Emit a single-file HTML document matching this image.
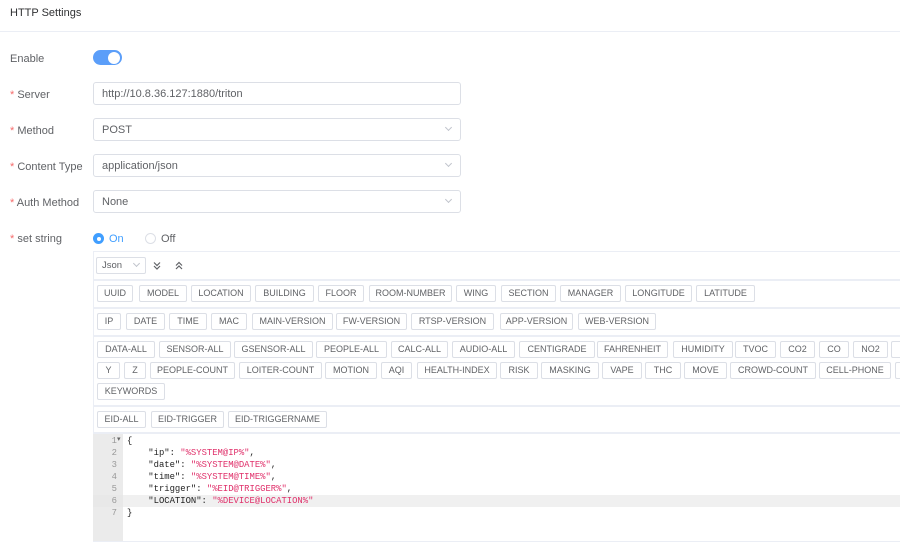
<!DOCTYPE html>
<html><head><meta charset="utf-8"><style>
*{box-sizing:border-box;margin:0;padding:0}
body{width:900px;height:550px;overflow:hidden;background:#fff;font-family:"Liberation Sans",sans-serif;color:#606266;position:relative}
.a{position:absolute}
.title{left:10px;top:7px;font-size:11px;color:#303133}
.hl{left:0;top:31px;width:900px;height:1px;background:#ebeef5}
.lab{left:10px;font-size:11px;color:#606266}
.lab i{color:#f56c6c;font-style:normal}
.inp{left:93px;width:368px;height:23px;border:1px solid #dcdfe6;border-radius:3px;font-size:11px;padding:5px 8px;color:#606266}
.chev{position:absolute;right:9px;top:6px;width:5px;height:5px;border-right:1px solid #c0c4cc;border-bottom:1px solid #c0c4cc;transform:rotate(45deg)}
.b{position:absolute;height:17px;border:1px solid #dcdfe6;border-radius:2px;font-size:9px;line-height:15px;text-align:center;color:#606266;white-space:nowrap;overflow:hidden}
.sep{position:absolute;left:93px;width:807px;height:2px;background:#ebeef5}
.code{font-family:"Liberation Mono",monospace;font-size:8.9px;line-height:12px}
.s{color:#e0316b}
</style></head><body>
<div class="a title">HTTP Settings</div>
<div class="a hl"></div>

<div class="a lab" style="top:53px">Enable</div>
<div class="a" style="left:93px;top:50px;width:29px;height:15px;border-radius:8px;background:#5b9ef9"></div>
<div class="a" style="left:108px;top:51.5px;width:12px;height:12px;border-radius:50%;background:#fff"></div>

<div class="a lab" style="top:89px"><i>*</i> Server</div>
<div class="a inp" style="top:82px">http://10.8.36.127:1880/triton</div>
<div class="a lab" style="top:125px"><i>*</i> Method</div>
<div class="a inp" style="top:118px">POST<span class="chev"></span></div>
<div class="a lab" style="top:161px"><i>*</i> Content Type</div>
<div class="a inp" style="top:154px">application/json<span class="chev"></span></div>
<div class="a lab" style="top:197px"><i>*</i> Auth Method</div>
<div class="a inp" style="top:190px">None<span class="chev"></span></div>

<div class="a lab" style="top:233px"><i>*</i> set string</div>
<div class="a" style="left:93px;top:233px;width:11px;height:11px;border-radius:50%;background:#409eff"></div>
<div class="a" style="left:96.5px;top:236.5px;width:4px;height:4px;border-radius:50%;background:#fff"></div>
<div class="a" style="left:109px;top:233px;font-size:11px;color:#409eff">On</div>
<div class="a" style="left:145px;top:233px;width:11px;height:11px;border-radius:50%;border:1px solid #dcdfe6"></div>
<div class="a" style="left:161px;top:233px;font-size:11px;color:#606266">Off</div>

<div class="a" style="left:93px;top:251px;width:820px;height:291px;border:1px solid #ebeef5;border-right:none"></div>
<div class="a" style="left:96px;top:257px;width:50px;height:17px;border:1px solid #dcdfe6;border-radius:2px;font-size:9.5px;padding:2px 5px">Json<span class="chev" style="right:6px;top:3px;width:5px;height:5px"></span></div>
<svg class="a" style="left:152px;top:261px" width="10" height="10" viewBox="0 0 10 10"><path d="M2 1.5L5 4.5L8 1.5M2 5L5 8L8 5" fill="none" stroke="#606266" stroke-width="1.2"/></svg>
<svg class="a" style="left:174px;top:261px" width="10" height="10" viewBox="0 0 10 10"><path d="M2 4.5L5 1.5L8 4.5M2 8L5 5L8 8" fill="none" stroke="#606266" stroke-width="1.2"/></svg>
<div class="sep" style="top:279px"></div>

<div class="b" style="left:97px;top:285px;width:36px">UUID</div>
<div class="b" style="left:139px;top:285px;width:48px">MODEL</div>
<div class="b" style="left:191px;top:285px;width:60px">LOCATION</div>
<div class="b" style="left:255px;top:285px;width:59px">BUILDING</div>
<div class="b" style="left:318px;top:285px;width:46px">FLOOR</div>
<div class="b" style="left:369px;top:285px;width:83px">ROOM-NUMBER</div>
<div class="b" style="left:456px;top:285px;width:40px">WING</div>
<div class="b" style="left:501px;top:285px;width:55px">SECTION</div>
<div class="b" style="left:560px;top:285px;width:61px">MANAGER</div>
<div class="b" style="left:625px;top:285px;width:67px">LONGITUDE</div>
<div class="b" style="left:696px;top:285px;width:59px">LATITUDE</div>
<div class="sep" style="top:307px"></div>

<div class="b" style="left:97px;top:313px;width:24px">IP</div>
<div class="b" style="left:126px;top:313px;width:39px">DATE</div>
<div class="b" style="left:169px;top:313px;width:38px">TIME</div>
<div class="b" style="left:211px;top:313px;width:36px">MAC</div>
<div class="b" style="left:252px;top:313px;width:81px">MAIN-VERSION</div>
<div class="b" style="left:336px;top:313px;width:71px">FW-VERSION</div>
<div class="b" style="left:411px;top:313px;width:83px">RTSP-VERSION</div>
<div class="b" style="left:500px;top:313px;width:73px">APP-VERSION</div>
<div class="b" style="left:578px;top:313px;width:78px">WEB-VERSION</div>
<div class="sep" style="top:335px"></div>

<div class="b" style="left:97px;top:341px;width:58px">DATA-ALL</div>
<div class="b" style="left:159px;top:341px;width:72px">SENSOR-ALL</div>
<div class="b" style="left:234px;top:341px;width:79px">GSENSOR-ALL</div>
<div class="b" style="left:316px;top:341px;width:71px">PEOPLE-ALL</div>
<div class="b" style="left:391px;top:341px;width:57px">CALC-ALL</div>
<div class="b" style="left:452px;top:341px;width:63px">AUDIO-ALL</div>
<div class="b" style="left:519px;top:341px;width:76px">CENTIGRADE</div>
<div class="b" style="left:597px;top:341px;width:71px">FAHRENHEIT</div>
<div class="b" style="left:673px;top:341px;width:60px">HUMIDITY</div>
<div class="b" style="left:735px;top:341px;width:41px">TVOC</div>
<div class="b" style="left:780px;top:341px;width:35px">CO2</div>
<div class="b" style="left:819px;top:341px;width:30px">CO</div>
<div class="b" style="left:853px;top:341px;width:35px">NO2</div>
<div class="b" style="left:891px;top:341px;width:20px"></div>

<div class="b" style="left:97px;top:362px;width:23px">Y</div>
<div class="b" style="left:124px;top:362px;width:22px">Z</div>
<div class="b" style="left:150px;top:362px;width:85px">PEOPLE-COUNT</div>
<div class="b" style="left:239px;top:362px;width:83px">LOITER-COUNT</div>
<div class="b" style="left:325px;top:362px;width:52px">MOTION</div>
<div class="b" style="left:381px;top:362px;width:31px">AQI</div>
<div class="b" style="left:417px;top:362px;width:80px">HEALTH-INDEX</div>
<div class="b" style="left:500px;top:362px;width:38px">RISK</div>
<div class="b" style="left:541px;top:362px;width:58px">MASKING</div>
<div class="b" style="left:602px;top:362px;width:40px">VAPE</div>
<div class="b" style="left:645px;top:362px;width:36px">THC</div>
<div class="b" style="left:684px;top:362px;width:43px">MOVE</div>
<div class="b" style="left:730px;top:362px;width:86px">CROWD-COUNT</div>
<div class="b" style="left:819px;top:362px;width:72px">CELL-PHONE</div>
<div class="b" style="left:895px;top:362px;width:20px"></div>
<div class="b" style="left:97px;top:383px;width:68px">KEYWORDS</div>
<div class="sep" style="top:405px"></div>

<div class="b" style="left:97px;top:411px;width:49px">EID-ALL</div>
<div class="b" style="left:151px;top:411px;width:73px">EID-TRIGGER</div>
<div class="b" style="left:228px;top:411px;width:99px">EID-TRIGGERNAME</div>
<div class="sep" style="top:432px"></div>

<div class="a" style="left:93px;top:434px;width:30px;height:107px;background:#ebebeb"></div>
<div class="a" style="left:93px;top:495px;width:807px;height:12px;background:#e8e8e8"></div>
<div class="a" style="left:123px;top:495px;width:777px;height:12px;background:#f0f0f0"></div>
<div class="a code" style="left:93px;top:435px;width:24px;text-align:right;color:#999">1<br>2<br>3<br>4<br>5<br>6<br>7</div>
<div class="a" style="left:117px;top:435px;font-size:7px;color:#666">&#9662;</div>
<div class="a code" style="left:127px;top:435px;color:#222;white-space:pre">{
    "ip": <span class="s">"%SYSTEM@IP%"</span>,
    "date": <span class="s">"%SYSTEM@DATE%"</span>,
    "time": <span class="s">"%SYSTEM@TIME%"</span>,
    "trigger": <span class="s">"%EID@TRIGGER%"</span>,
    "LOCATION": <span class="s">"%DEVICE@LOCATION%"</span>
}</div>
</body></html>
